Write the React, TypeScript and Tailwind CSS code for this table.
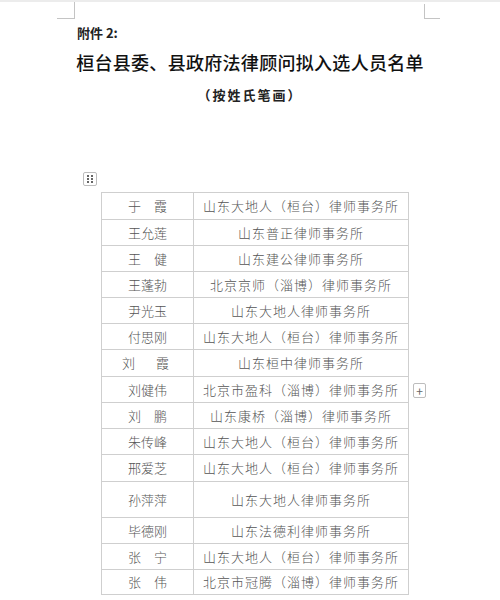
const cjk = "font-['Noto_Sans_CJK_SC','Noto_Sans',sans-serif]"

const rows: { name: string; firm: string; h: string; nameCls?: string }[] = [
  { name: "于　霞", firm: "山东大地人（桓台）律师事务所", h: "h-[27px]" },
  { name: "王允莲", firm: "山东普正律师事务所", h: "h-[26px]" },
  { name: "王　健", firm: "山东建公律师事务所", h: "h-[26px]" },
  { name: "王蓬勃", firm: "北京京师（淄博）律师事务所", h: "h-[26px]" },
  { name: "尹光玉", firm: "山东大地人律师事务所", h: "h-[26px]" },
  { name: "付思刚", firm: "山东大地人（桓台）律师事务所", h: "h-[26px]" },
  { name: "刘　霞", firm: "山东桓中律师事务所", h: "h-[27px]", nameCls: "tracking-[4px]" },
  { name: "刘健伟", firm: "北京市盈科（淄博）律师事务所", h: "h-[26px]" },
  { name: "刘　鹏", firm: "山东康桥（淄博）律师事务所", h: "h-[26px]" },
  { name: "朱传峰", firm: "山东大地人（桓台）律师事务所", h: "h-[26px]" },
  { name: "邢爱芝", firm: "山东大地人（桓台）律师事务所", h: "h-[27px]" },
  { name: "孙萍萍", firm: "山东大地人律师事务所", h: "h-[36px]" },
  { name: "毕德刚", firm: "山东法德利律师事务所", h: "h-[26px]" },
  { name: "张　宁", firm: "山东大地人（桓台）律师事务所", h: "h-[26px]" },
  { name: "张　伟", firm: "北京市冠腾（淄博）律师事务所", h: "h-[25px]" },
]

export default function App() {
  return (
    <div className={`relative w-[500px] h-[600px] bg-white overflow-hidden border-t-2 border-[#ececec] ${cjk}`}>
      {/* page corner marks */}
      <div className="absolute left-[57px] top-0 w-[18px] h-[17px] border-r border-b border-[#c4c4c4]" />
      <div className="absolute left-[424px] top-[2px] w-[16px] h-[15px] border-l border-b border-[#c4c4c4]" />

      <div className="pl-[77px] pt-[23px] text-[13px] leading-[16px] font-bold text-[#222]">附件 2:</div>

      <div className="mt-[10px] text-center text-[18px] leading-[22px] font-medium tracking-[0.3px] text-[#111]">
        桓台县委、县政府法律顾问拟入选人员名单
      </div>

      <div className="mt-[14px] text-center text-[13px] leading-[16px] font-bold tracking-[2px] text-[#222]">
        （按姓氏笔画）
      </div>

      <div className="mt-[69px] pl-[83px] flex">
        <div className="w-[14px] h-[14px] border border-[#bdbdbd] rounded-[2px] grid grid-cols-2 place-content-center gap-x-[2px] gap-y-[1px] px-[3px]">
          {[0, 1, 2, 3, 4, 5].map(i => (
            <span key={i} className="w-[2px] h-[2px] bg-[#666]" />
          ))}
        </div>
      </div>

      <div className="relative mt-[6px] ml-[101px] w-[308px]">
        <table className="w-full border-collapse text-[13px] text-[#555] font-light">
          <tbody>
            {rows.map((r, i) => (
              <tr key={i} className={r.h}>
                <td className={`w-[92px] border border-[#cfcfcf] text-center p-0 ${r.nameCls ?? ""}`}>{r.name}</td>
                <td className="border border-[#cfcfcf] text-center p-0 tracking-[1px]">{r.firm}</td>
              </tr>
            ))}
          </tbody>
        </table>
        <div className="absolute left-[312px] top-[191px] w-[13px] h-[15px] border border-[#bdbdbd] rounded-[2px] flex items-center justify-center text-[12px] leading-none text-[#666]">
          +
        </div>
      </div>
    </div>
  )
}
